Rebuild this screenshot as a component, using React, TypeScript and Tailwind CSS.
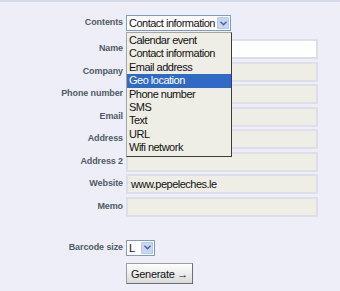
import { ReactNode } from 'react';

const fieldFont = { fontFamily: '"Liberation Sans", Arial, sans-serif' };

const options = [
  'Calendar event',
  'Contact information',
  'Email address',
  'Geo location',
  'Phone number',
  'SMS',
  'Text',
  'URL',
  'Wifi network',
];

function Chevron() {
  return (
    <svg width="7" height="5" viewBox="0 0 7 5" fill="none">
      <path d="M0.5 0.8 L3.5 3.8 L6.5 0.8" stroke="#4d6185" strokeWidth="1.4" />
    </svg>
  );
}

function FakeSelect({ value, width }: { value: string; width: string }) {
  return (
    <div className={`flex h-[16px] ${width} items-stretch border border-[#7f9db9] bg-white`}>
      <span className="flex-1 pl-[2px] text-[11px] leading-[14px] tracking-[-0.5px] text-[#111]">{value}</span>
      <span className="m-px flex w-[12px] items-center justify-center rounded-[1px] border border-[#b9c9ef] bg-[#c6d5fb]">
        <Chevron />
      </span>
    </div>
  );
}

function Row({ label, children, className = '' }: { label: string; children: ReactNode; className?: string }) {
  return (
    <div className={`flex items-center gap-[3px] ${className}`}>
      <label className="w-[123px] text-right text-[9px] font-bold tracking-[-0.1px] text-[#4f5b67]">{label}</label>
      {children}
    </div>
  );
}

function Field({ value = '', white = false }: { value?: string; white?: boolean }) {
  return (
    <div
      className={`flex h-[20px] w-[192px] items-center border-2 border-[#dedee8] pl-[3px] text-[11px] tracking-[-0.5px] text-[#111] ${
        white ? 'bg-white' : 'bg-[#efeee6]'
      }`}
    >
      {value}
    </div>
  );
}

export default function App() {
  const rows = ['Company', 'Phone number', 'Email', 'Address', 'Address 2', 'Website', 'Memo'];

  return (
    <div className="h-[291px] w-[340px] overflow-hidden border-t-2 border-[#d3dbe8] bg-[#eeeef8]" style={fieldFont}>
      <div className="relative flex flex-col">
        <Row label="Contents" className="mt-[13px]">
          <div className="relative">
            <FakeSelect value="Contact information" width="w-[105px]" />
            {/* open dropdown list */}
            <ul className="absolute left-0 top-[17px] z-10 w-[106px] border border-[#a5a5a5] border-b-[#3d3d3d] border-r-[#3d3d3d] bg-[#efeee6] py-px text-[11px] tracking-[-0.5px] text-[#111]">
              {options.map((o) => (
                <li
                  key={o}
                  className={`h-[13.4px] pl-[2px] leading-[13.4px] ${o === 'Geo location' ? 'bg-[#316ac5] text-white' : ''}`}
                >
                  {o}
                </li>
              ))}
            </ul>
          </div>
        </Row>

        <Row label="Name" className="mt-[8px]">
          <Field white />
        </Row>

        {rows.map((r) => (
          <Row key={r} label={r} className="mt-[2.5px]">
            <Field value={r === 'Website' ? 'www.pepeleches.le' : ''} />
          </Row>
        ))}

        <Row label="Barcode size" className="mt-[23px]">
          <FakeSelect value="L" width="w-[29px]" />
        </Row>

        <div className="mt-[5px] pl-[126px]">
          <button className="h-[21px] w-[67px] border border-[#9c9c9c] border-b-[#6f6f6f] border-r-[#6f6f6f] bg-gradient-to-b from-white to-[#dadada] text-[11px] tracking-[-0.3px] text-[#111]">
            Generate →
          </button>
        </div>
      </div>
    </div>
  );
}
